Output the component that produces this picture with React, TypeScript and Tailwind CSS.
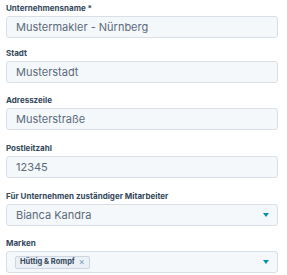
import { ReactNode } from "react";

const font = { fontFamily: "Inter, 'Noto Sans', sans-serif" };

function Label({ children }: { children: ReactNode }) {
  return (
    <div className="h-[14px] leading-[14px] text-[8px] font-bold text-[#33475b] mb-px">
      {children}
    </div>
  );
}

function Input({ value }: { value: string }) {
  return (
    <div className="h-[22px] rounded-[3px] border border-[#d9dfe7] bg-[#f5f8fa] pl-[9px] pr-[8px] flex items-center text-[11px] text-[#5a6a7c]">
      {value}
    </div>
  );
}

function Caret() {
  return (
    <svg width="6" height="4" viewBox="0 0 6 4" className="ml-auto">
      <path d="M0 0h6L3 4z" fill="#0091ae" />
    </svg>
  );
}

function Select({ children }: { children: ReactNode }) {
  return (
    <div className="h-[22px] rounded-[3px] border border-[#d9dfe7] bg-[#f5f8fa] pl-[9px] pr-[8px] flex items-center text-[11px] text-[#5a6a7c]">
      {children}
      <Caret />
    </div>
  );
}

export default function App() {
  return (
    <div className="w-[287px] h-[275px] bg-white pl-[6px] pt-px pr-[9px]" style={font}>
      <Label>Unternehmensname *</Label>
      <Input value="Mustermakler - Nürnberg" />

      <div className="mt-[8px]">
        <Label>Stadt</Label>
        <Input value="Musterstadt" />
      </div>

      <div className="mt-[10px]">
        <Label>Adresszeile</Label>
        <Input value="Musterstraße" />
      </div>

      <div className="mt-[11px]">
        <Label>Postleitzahl</Label>
        <Input value="12345" />
      </div>

      <div className="mt-[11px]">
        <Label>Für Unternehmen zuständiger Mitarbeiter</Label>
        <Select>Bianca Kandra</Select>
      </div>

      <div className="mt-[10px]">
        <Label>Marken</Label>
        <Select>
          <span className="h-[13px] -ml-[1px] px-[4px] flex items-center gap-[4px] rounded-[2px] border border-[#cbd6e2] bg-[#eaf0f6] text-[7.5px] font-bold text-[#33475b]">
            Hüttig &amp; Rompf
            <span className="text-[9px] font-normal text-[#7c98b6]">×</span>
          </span>
        </Select>
      </div>
    </div>
  );
}
